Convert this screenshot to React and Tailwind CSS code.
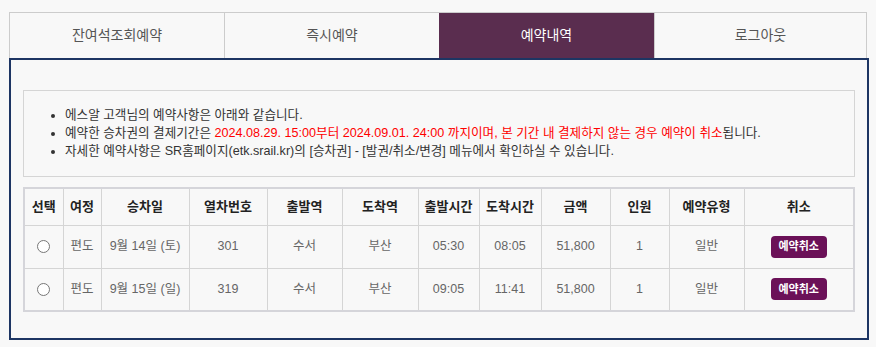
import React from "react";

const FONT = { fontFamily: '"Liberation Sans", Arial, "Noto Sans CJK KR", sans-serif' };

const tabs = ["잔여석조회예약", "즉시예약", "예약내역", "로그아웃"];

const cols = [
  { label: "선택", w: "w-[39px]" },
  { label: "여정", w: "w-[38px]" },
  { label: "승차일", w: "w-[88px]" },
  { label: "열차번호", w: "w-[78px]" },
  { label: "출발역", w: "w-[75px]" },
  { label: "도착역", w: "w-[76px]" },
  { label: "출발시간", w: "w-[61px]" },
  { label: "도착시간", w: "w-[62px]" },
  { label: "금액", w: "w-[69px]" },
  { label: "인원", w: "w-[59px]" },
  { label: "예약유형", w: "w-[75px]" },
  { label: "취소", w: "" },
];

const rows = [
  { trip: "편도", date: "9월 14일 (토)", train: "301", from: "수서", to: "부산", dep: "05:30", arr: "08:05", price: "51,800", count: "1", type: "일반" },
  { trip: "편도", date: "9월 15일 (일)", train: "319", from: "수서", to: "부산", dep: "09:05", arr: "11:41", price: "51,800", count: "1", type: "일반" },
];

export default function App() {
  return (
    <div className="min-h-[347px] bg-[#f8f8f8] pt-[12px]" style={FONT}>
      <div className="ml-[9px] w-[860px]">
        {/* tabs */}
        <div className="grid grid-cols-[215px_215px_215px_213px] w-[858px] h-[46px] border-t border-[#cccccc]">
          {tabs.map((t, i) => {
            const active = i === 2;
            return (
              <div
                key={t}
                className={`flex items-center justify-center text-[14px] ${
                  active
                    ? "bg-[#5a2d4f] text-white"
                    : "text-[#555555] border-l border-[#cccccc]" + (i === 3 ? " border-r" : "")
                }`}
              >
                {t}
              </div>
            );
          })}
        </div>

        {/* panel */}
        <div className="border-2 border-[#1d3563] px-[12px] pt-[30px] pb-[26px]">
          <div className="border border-[#d5d5d5] h-[87px] pt-[15px]">
            <ul className="list-disc pl-[41px] text-[12.6px] leading-[18px] text-[#333333]">
              <li>에스알 고객님의 예약사항은 아래와 같습니다.</li>
              <li>
                예약한 승차권의 결제기간은{" "}
                <span className="text-[#ff0000]">
                  2024.08.29. 15:00부터 2024.09.01. 24:00 까지이며, 본 기간 내 결제하지 않는 경우 예약이 취소
                </span>
                됩니다.
              </li>
              <li>자세한 예약사항은 SR홈페이지(etk.srail.kr)의 [승차권] - [발권/취소/변경] 메뉴에서 확인하실 수 있습니다.</li>
            </ul>
          </div>

          <table className="mt-[10px] w-[832px] border-collapse border-2 border-[#d5d5da] table-fixed">
            <thead>
              <tr className="h-[37px]">
                {cols.map((c) => (
                  <th
                    key={c.label}
                    className={`${c.w} border border-[#d5d5d5] text-[13px] font-bold text-[#222222] text-center p-0`}
                  >
                    {c.label}
                  </th>
                ))}
              </tr>
            </thead>
            <tbody>
              {rows.map((r, i) => (
                <tr key={i} className="h-[43px] text-[12.5px] text-[#666666] text-center">
                  <td className="border border-[#d5d5d5] p-0">
                    <input type="radio" name="sel" className="w-[13px] h-[13px] align-middle m-0" />
                  </td>
                  <td className="border border-[#d5d5d5] p-0">{r.trip}</td>
                  <td className="border border-[#d5d5d5] p-0">{r.date}</td>
                  <td className="border border-[#d5d5d5] p-0">{r.train}</td>
                  <td className="border border-[#d5d5d5] p-0">{r.from}</td>
                  <td className="border border-[#d5d5d5] p-0">{r.to}</td>
                  <td className="border border-[#d5d5d5] p-0">{r.dep}</td>
                  <td className="border border-[#d5d5d5] p-0">{r.arr}</td>
                  <td className="border border-[#d5d5d5] p-0">{r.price}</td>
                  <td className="border border-[#d5d5d5] p-0">{r.count}</td>
                  <td className="border border-[#d5d5d5] p-0">{r.type}</td>
                  <td className="border border-[#d5d5d5] p-0">
                    <button className="inline-flex items-center justify-center w-[56px] h-[22px] rounded-[4px] bg-[#6b1158] text-white text-[11px] font-bold">
                      예약취소
                    </button>
                  </td>
                </tr>
              ))}
            </tbody>
          </table>
        </div>
      </div>
    </div>
  );
}
